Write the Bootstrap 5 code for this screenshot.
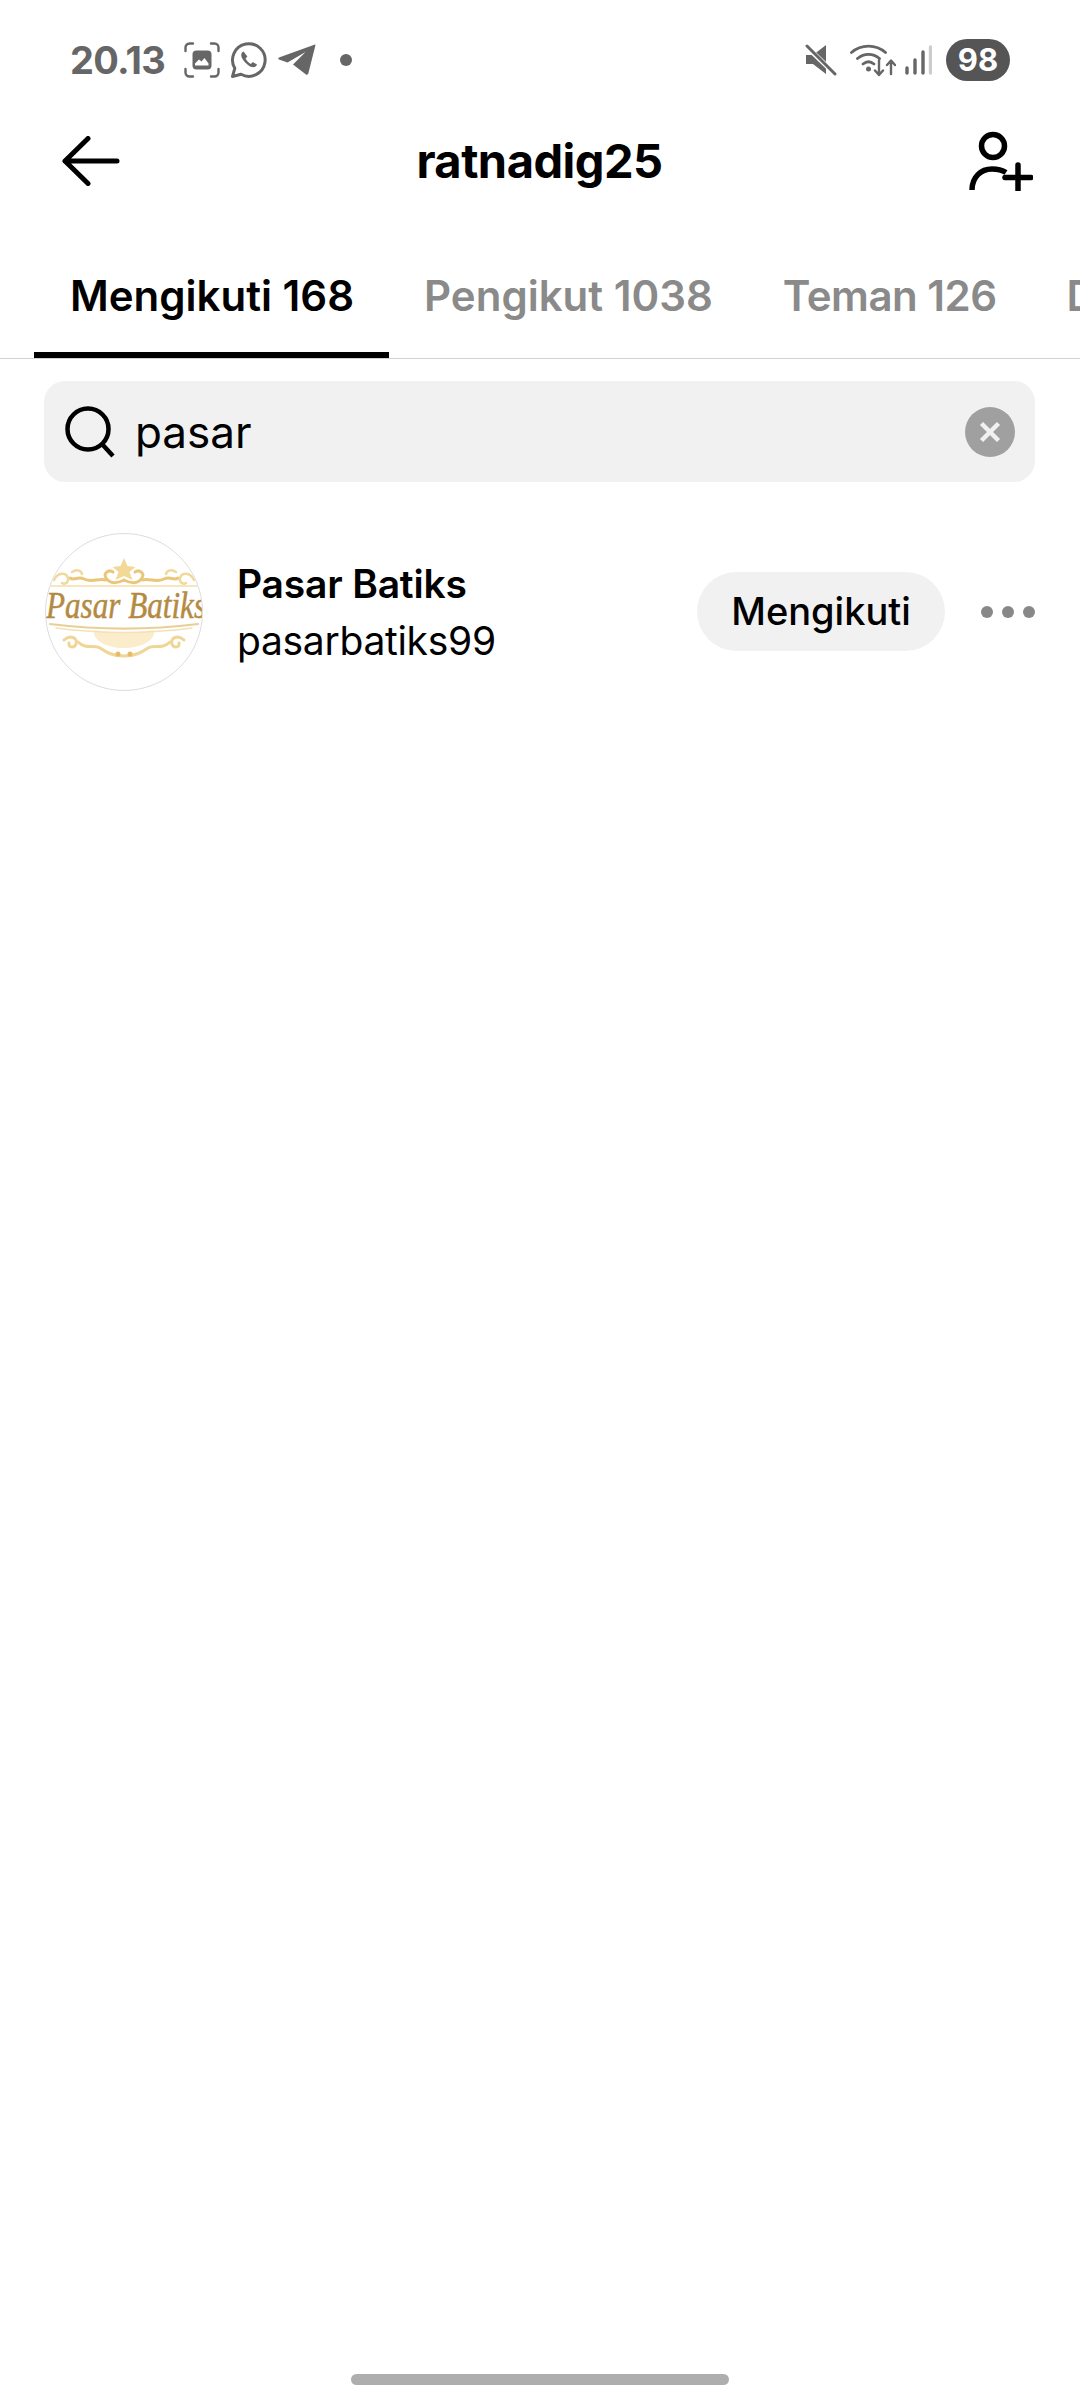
<!DOCTYPE html>
<html lang="en">
<head>
    <meta charset="UTF-8">
    <meta name="viewport" content="width=device-width, initial-scale=1.0">
    <title>ratnadig25</title>
    <link href="https://cdn.jsdelivr.net/npm/bootstrap@5.3.0/dist/css/bootstrap.min.css" rel="stylesheet">
    <style>
        html, body {
            height: 2400px;
        }
        body {
            font-family: "Inter", "Noto Sans", sans-serif;
            background: #fff;
            color: #000;
            overflow: hidden;
        }
        .screen {
            width: 1080px;
            height: 2400px;
        }
        .status-row {
            height: 120px;
            padding: 0 70px 0 70px;
            color: #666;
        }
        .status-time {
            font-size: 38px;
            font-weight: 700;
            letter-spacing: -0.7px;
            width: 114px;
        }
        .status-dot {
            width: 12px;
            height: 12px;
            margin-left: 24px;
            background: #666;
        }
        .battery-pill {
            width: 64px;
            height: 42px;
            background: #555;
            color: #fff;
            font-size: 31px;
            font-weight: 700;
            margin-left: 14px;
        }
        .top-row {
            height: 82px;
            padding: 0 47px 0 62px;
        }
        .page-title {
            font-size: 47px;
            font-weight: 700;
            margin: 0 10px 0 0;
            letter-spacing: -0.5px;
        }
        .tab-strip {
            height: 157px;
            border-bottom: 1px solid #d2d2d2;
            padding-left: 34px;
            white-space: nowrap;
        }
        .tab-item {
            height: 156px;
            padding: 62px 35px 0;
            font-size: 42px;
            font-weight: 600;
            line-height: 64px;
            color: #8a8a8a;
            flex: none;
        }
        .tab-on {
            color: #000;
            border-bottom: 6px solid #000;
            padding-left: 36px;
        }
        .tab-tight {
            letter-spacing: -0.5px;
        }
        .search-box {
            margin: 22px 45px 0 44px;
            height: 101px;
            background: #f1f1f1;
            border-radius: 21px;
            padding: 0 20px 0 21px;
        }
        .search-text {
            font-size: 44px;
            margin-left: 20px;
            line-height: 1;
        }
        .person-row {
            margin-top: 51px;
            padding: 0 45px;
        }
        .avatar-ring {
            width: 158px;
            height: 158px;
            border: 1px solid #ddd;
            overflow: hidden;
            flex: none;
        }
        .person-text {
            margin-left: 34px;
            line-height: 1;
        }
        .person-name {
            font-size: 39px;
            font-weight: 600;
            margin-bottom: 18px;
            letter-spacing: -0.2px;
        }
        .person-handle {
            font-size: 39px;
            letter-spacing: -0.3px;
        }
        .follow-pill {
            width: 248px;
            height: 79px;
            background: #f1f1f1;
            font-size: 38px;
            font-weight: 500;
            padding: 0;
            border: 0;
            color: #000;
            border-radius: 40px;
            margin-bottom: 2px;
        }
        .more-dots {
            margin-left: 36px;
            gap: 9px;
        }
        .more-dots span {
            width: 12px;
            height: 12px;
            background: #888;
        }
        .home-bar {
            width: 378px;
            height: 11px;
            background: #aeaeae;
            margin: 0 auto 15px;
        }
    </style>
</head>
<body>
    <div class="screen d-flex flex-column">
        <!-- status bar -->
        <div class="status-row d-flex align-items-center">
            <span class="status-time">20.13</span>
            <svg width="36" height="36" viewBox="0 0 36 36" fill="none">
                <path d="M1.500 9V5.500a4 4 0 0 1 4-4H9M27 1.500h3.500a4 4 0 0 1 4 4V9M34.500 27v3.500a4 4 0 0 1-4 4H27M9 34.500H5.500a4 4 0 0 1-4-4V27" stroke="#666" stroke-width="2.400" stroke-linecap="round"/>
                <rect x="8.500" y="8.500" width="19" height="19" rx="4" fill="#666"/>
                <path d="M11 21.500l4-4 2.500 2 3-3.500 4 5.500v2H11z" fill="#fff"/>
            </svg>
            <svg style="margin-left:10px" width="38" height="38" viewBox="0 0 38 38" fill="none">
                <path d="M2.500 35.500l2.300-8.200A16.300 16.300 0 1 1 11 33.300z" stroke="#666" stroke-width="3" stroke-linejoin="round"/>
                <path d="M13.500 10.500c-1.500.6-2.500 2.300-2.200 4.400.6 3.900 6.900 10.400 11 11.200 2.300.4 4.100-.7 4.700-2.500l-4.200-2.500-1.900 1.800c-2-.7-4.500-3.300-5.300-5.300l1.800-2z" fill="#666"/>
            </svg>
            <svg style="margin-left:10px" width="38" height="32" viewBox="0 0 38 32" fill="#666">
                <path d="M37 0.500L1 13.500c-1 .5-1 1.500 0 2l8.500 3L27.500 8 15 20.500l13 10c1 .6 2 .2 2.300-.9L37.500 1c0-.4-.2-.6-.5-.5z"/>
            </svg>
            <span class="status-dot rounded-circle"></span>
            <div class="ms-auto d-flex align-items-center">
                <svg width="32" height="32" viewBox="0 0 32 32" fill="#666">
                    <path d="M1 11h7l13-10v29L8 20H1z"/>
                    <path d="M1 2l29 28" stroke="#fff" stroke-width="5"/>
                    <path d="M2 2l28 28" stroke="#666" stroke-width="3" stroke-linecap="round"/>
                </svg>
                <svg style="margin-left:13px" width="46" height="34" viewBox="0 0 46 34" fill="none">
                    <path d="M1.500 9.500C11 1 26 1 35.500 9.500M7.500 15.500c6.500-5.500 15.500-5.500 22 0M13 21c3.500-2.800 7.500-2.800 11 0" stroke="#666" stroke-width="2.800" stroke-linecap="round"/>
                    <circle cx="18.500" cy="26" r="2.500" fill="#666"/>
                    <path d="M29 17v15M25 27.500l4 4.500 4-4.500M41 31V18M37 22l4-4.500 4 4.500" stroke="#666" stroke-width="2.400" stroke-linecap="round" stroke-linejoin="round"/>
                </svg>
                <svg style="margin-left:9px" width="27" height="30" viewBox="0 0 27 30" fill="none" stroke-width="3.400" stroke-linecap="round">
                    <path d="M2 28v-5M10 28V15M18 28V7" stroke="#666"/>
                    <path d="M25.500 28V2" stroke="#ccc"/>
                </svg>
                <span class="battery-pill rounded-pill d-flex align-items-center justify-content-center">98</span>
            </div>
        </div>

        <!-- title row -->
        <div class="top-row d-flex align-items-center justify-content-between">
            <svg width="58" height="50" viewBox="0 0 58 50" fill="none" stroke="#000" stroke-width="5" stroke-linecap="round" stroke-linejoin="round">
                <path d="M55 25H3M26 2.500L3 25l23 22.500"/>
            </svg>
            <h1 class="page-title">ratnadig25</h1>
            <svg width="64" height="60" viewBox="0 0 64 60" fill="none" stroke="#000" stroke-width="5.500">
                <circle cx="24" cy="15" r="11.500"/>
                <path d="M3 59c0-13 9-21 20-21 5 0 10 1 14 3.500"/>
                <path d="M49 34v25M36 46.500h26" stroke-linecap="round"/>
            </svg>
        </div>

        <!-- tabs -->
        <div class="tab-strip d-flex overflow-hidden">
            <div class="tab-item tab-on">Mengikuti 168</div>
            <div class="tab-item">Pengikut 1038</div>
            <div class="tab-item tab-tight">Teman 126</div>
            <div class="tab-item">Disarankan</div>
        </div>

        <!-- search -->
        <div class="search-box d-flex align-items-center">
            <svg width="50" height="52" viewBox="0 0 50 52" fill="none" stroke="#000" stroke-width="4.500">
                <circle cx="23" cy="23" r="20.500"/>
                <path d="M37 38l11 12"/>
            </svg>
            <span class="search-text">pasar</span>
            <svg class="ms-auto" width="50" height="50" viewBox="0 0 50 50">
                <circle cx="25" cy="25" r="25" fill="#a0a0a0"/>
                <path d="M16.500 16.500l17 17M33.500 16.500l-17 17" stroke="#f1f1f1" stroke-width="4.500"/>
            </svg>
        </div>

        <!-- result -->
        <div class="person-row d-flex align-items-center">
            <div class="avatar-ring rounded-circle">
                <svg width="156" height="156" viewBox="0 0 156 156" fill="none">
                    <defs>
                        <filter id="soft"><feGaussianBlur stdDeviation="0.7"/></filter>
                    </defs>
                    <g filter="url(#soft)" stroke-linecap="round">
                        <path d="M78 24l3.500 8 8 1-6 5 3 8-8.500-4-8.500 4 3-8-6-5 8-1z" fill="#f3d998"/>
                        <g stroke="#e9c679" stroke-width="3">
                            <path d="M78 46c-8 4-14 4-18-2-3-5 3-9 7-6M78 46c8 4 14 4 18-2 3-5-3-9-7-6"/>
                            <path d="M60 46c-8-2-14 3-22-1-6-3-10 2-14-1M96 46c8-2 14 3 22-1 6-3 10 2 14-1"/>
                        </g>
                        <g stroke="#f0d99c" stroke-width="2.500">
                            <path d="M8 46c4-8 12-8 14-2 1 4-3 7-6 5M148 46c-4-8-12-8-14-2-1 4 3 7 6 5"/>
                            <path d="M26 38c4-3 9-2 10 2M130 38c-4-3-9-2-10 2"/>
                        </g>
                        <path d="M4 52h148" stroke="#f6e5bd" stroke-width="2"/>
                        <path d="M48 96c18 3 42 3 60 0 2 10-12 18-30 18s-32-8-30-18z" fill="#fbeccb"/>
                        <path d="M4 90c48 6 100 6 148 0" stroke="#e9cf95" stroke-width="2"/>
                        <path d="M10 94c46 6 90 6 136 0" stroke="#f4e2b6" stroke-width="1.500"/>
                        <g stroke="#efd596" stroke-width="3">
                            <path d="M18 106c6-6 14-2 12 4-2 5-8 3-7-1M138 106c-6-6-14-2-12 4 2 5 8 3 7-1"/>
                            <path d="M32 108c8 8 16 2 22 6 6 4 12 8 24 8s18-4 24-8c6-4 14 2 22-6"/>
                        </g>
                        <circle cx="72" cy="120" r="2.500" fill="#e5bd68"/>
                        <circle cx="84" cy="120" r="2.500" fill="#e5bd68"/>
                    </g>
                    <text x="0" y="84" font-family="Liberation Serif, serif" font-style="italic" font-size="37" fill="#b48a42" stroke="#b48a42" stroke-width="0.500" textLength="160" lengthAdjust="spacingAndGlyphs">Pasar Batiks</text>
                </svg>
            </div>
            <div class="person-text">
                <div class="person-name">Pasar Batiks</div>
                <div class="person-handle">pasarbatiks99</div>
            </div>
            <button type="button" class="btn follow-pill ms-auto">Mengikuti</button>
            <div class="more-dots d-flex">
                <span class="rounded-circle"></span>
                <span class="rounded-circle"></span>
                <span class="rounded-circle"></span>
            </div>
        </div>

        <div class="home-bar rounded-pill mt-auto"></div>
    </div>
    <script src="https://cdn.jsdelivr.net/npm/bootstrap@5.3.0/dist/js/bootstrap.bundle.min.js"></script>
</body>
</html>
